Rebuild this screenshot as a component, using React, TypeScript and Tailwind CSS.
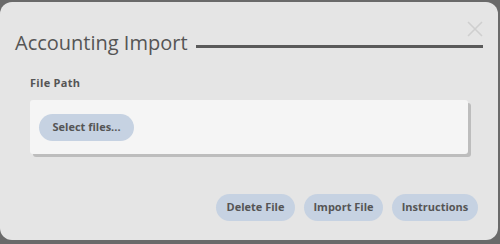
import React from 'react';

const font = { fontFamily: '"Open Sans", "Noto Sans", sans-serif' };

function PillButton({ label, className = '' }: { label: string; className?: string }) {
  return (
    <button
      className={`h-[27px] rounded-full bg-[#c6d2e2] text-[11px] font-bold text-[#555] ${className}`}
    >
      {label}
    </button>
  );
}

export default function App() {
  return (
    <div className="w-[500px] h-[244px] bg-[#6a6a6a] pt-[2px] overflow-hidden" style={font}>
      <div className="relative w-[498px] h-[238px] rounded-[12px] bg-[#e5e5e5]">
        <button className="absolute right-[15px] top-[19px] text-[#cfcfcf]">
          <svg className="w-[16px] h-[16px]" viewBox="0 0 16 16" fill="none" stroke="currentColor">
            <path d="M1 1l14 14M15 1L1 15" strokeWidth="1.6" />
          </svg>
        </button>

        <div className="flex items-center pl-[15px] pr-[15px] pt-[27px]">
          <h2 className="text-[20px] leading-[28px] text-[#555]">Accounting Import</h2>
          <div className="flex-1 h-[3px] bg-[#5a5a5a] ml-[8px] mt-[6px]" />
        </div>

        <div className="pl-[30px] pr-[30px] mt-[18px]">
          <div className="text-[11px] font-bold text-[#555] leading-[16px] tracking-[0.3px]">File Path</div>
          <div className="mt-[9px] h-[54px] rounded-[3px] bg-[#f5f5f5] shadow-[3px_3px_0_#bdbdbd] flex items-center pl-[9px]">
            <PillButton label="Select files..." className="w-[95px] h-[26px]" />
          </div>
        </div>

        <div className="flex justify-end gap-[9px] pr-[20px] mt-[40px]">
          <PillButton label="Delete File" className="w-[79px]" />
          <PillButton label="Import File" className="w-[79px]" />
          <PillButton label="Instructions" className="w-[86px]" />
        </div>
      </div>
    </div>
  );
}
